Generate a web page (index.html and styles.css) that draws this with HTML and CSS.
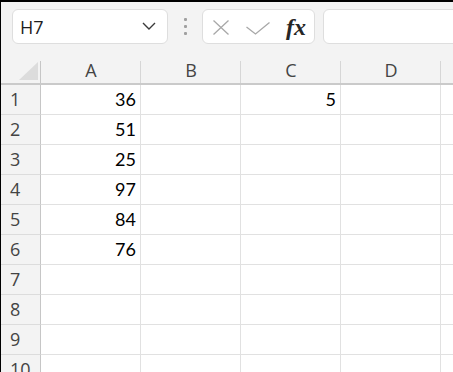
FILE: index.html
```html
<!DOCTYPE html>
<html>
<head>
<meta charset="utf-8">
<link rel="stylesheet" href="styles.css">
</head>
<body>
<div class="frame">
  <div class="toolbar">
    <div class="namebox">
      <span class="nb-text">H7</span>
      <svg class="chev" width="14" height="8" viewBox="0 0 14 8"><path d="M1 1 L7 7 L13 1" fill="none" stroke="#3a3a3a" stroke-width="1.4"/></svg>
    </div>
    <div class="grip"><span></span><span></span><span></span></div>
    <div class="fbtns">
      <svg class="ico-x" width="18" height="15" viewBox="0 0 18 15"><path d="M1.5 0.5 L16.5 14.5 M16.5 0.5 L1.5 14.5" fill="none" stroke="#a8a8a8" stroke-width="1.3"/></svg>
      <svg class="ico-ok" width="24" height="13" viewBox="0 0 24 13"><path d="M0.5 5 L9.5 12 L23.5 0.5" fill="none" stroke="#a8a8a8" stroke-width="1.3"/></svg>
      <span class="fx">fx</span>
    </div>
    <div class="finput"></div>
  </div>
  <div class="hdr">
    <div class="corner"><svg width="19" height="18" viewBox="0 0 19 18"><polygon points="19,0 19,18 0,18" fill="#dcdcdc"/></svg></div>
    <div class="ch">A</div>
    <div class="ch">B</div>
    <div class="ch">C</div>
    <div class="ch">D</div>
    <div class="ch last"></div>
  </div>
  <div class="row"><div class="rh">1</div><div class="c">36</div><div class="c"></div><div class="c">5</div><div class="c"></div><div class="c last"></div></div>
  <div class="row"><div class="rh">2</div><div class="c">51</div><div class="c"></div><div class="c"></div><div class="c"></div><div class="c last"></div></div>
  <div class="row"><div class="rh">3</div><div class="c">25</div><div class="c"></div><div class="c"></div><div class="c"></div><div class="c last"></div></div>
  <div class="row"><div class="rh">4</div><div class="c">97</div><div class="c"></div><div class="c"></div><div class="c"></div><div class="c last"></div></div>
  <div class="row"><div class="rh">5</div><div class="c">84</div><div class="c"></div><div class="c"></div><div class="c"></div><div class="c last"></div></div>
  <div class="row"><div class="rh">6</div><div class="c">76</div><div class="c"></div><div class="c"></div><div class="c"></div><div class="c last"></div></div>
  <div class="row"><div class="rh">7</div><div class="c"></div><div class="c"></div><div class="c"></div><div class="c"></div><div class="c last"></div></div>
  <div class="row"><div class="rh">8</div><div class="c"></div><div class="c"></div><div class="c"></div><div class="c"></div><div class="c last"></div></div>
  <div class="row"><div class="rh">9</div><div class="c"></div><div class="c"></div><div class="c"></div><div class="c"></div><div class="c last"></div></div>
  <div class="row"><div class="rh">10</div><div class="c"></div><div class="c"></div><div class="c"></div><div class="c"></div><div class="c last"></div></div>
</div>
</body>
</html>
```

FILE: styles.css
```css
html, body {
  margin: 0;
  padding: 0;
  background: #ffffff;
}
.frame {
  width: 453px;
  height: 372px;
  box-sizing: border-box;
  border-top: 2px solid #000;
  border-left: 1px solid #000;
  background: #f3f3f3;
  overflow: hidden;
  font-family: "Open Sans", "Noto Sans", sans-serif;
}
.toolbar {
  height: 55px;
  box-sizing: border-box;
  padding: 7px 0 0 11px;
  display: flex;
  align-items: flex-start;
}
.toolbar > * {
  flex: none;
}
.namebox {
  width: 156px;
  height: 35px;
  box-sizing: border-box;
  background: #fff;
  border: 1px solid #dedede;
  border-radius: 6px;
  display: flex;
  align-items: center;
  justify-content: space-between;
  padding: 2px 11px 0 7px;
}
.nb-text {
  font-size: 18px;
  color: #1e1e1e;
  line-height: 31px;
}
.chev {
  display: block;
  margin-top: -3px;
}
.grip {
  width: 34px;
  height: 35px;
  display: flex;
  flex-direction: column;
  align-items: center;
  justify-content: center;
  gap: 4px;
}
.grip span {
  width: 3px;
  height: 3px;
  background: #a0a0a0;
  border-radius: 1px;
}
.fbtns {
  width: 113px;
  height: 35px;
  box-sizing: border-box;
  background: #fff;
  border: 1px solid #dedede;
  border-radius: 6px;
  display: flex;
  align-items: center;
  padding: 0 0 0 9px;
}
.ico-x {
  display: block;
  margin-top: 2px;
  flex: none;
}
.ico-ok {
  display: block;
  margin-left: 16px;
  margin-top: 4px;
  flex: none;
}
.fx {
  margin-left: 16px;
  font-family: "Liberation Serif", "DejaVu Serif", serif;
  font-style: italic;
  font-weight: bold;
  font-size: 24px;
  color: #262626;
  line-height: 30px;
}
.finput {
  width: 160px;
  height: 35px;
  margin-left: 8px;
  box-sizing: border-box;
  background: #fff;
  border: 1px solid #dedede;
  border-radius: 6px;
}
.hdr {
  display: flex;
  height: 28px;
  box-sizing: border-box;
  border-bottom: 2px solid #cacaca;
}
.corner {
  width: 40px;
  flex: none;
  display: flex;
  justify-content: flex-end;
  align-items: flex-end;
  padding: 0 3px 3px 0;
  box-sizing: border-box;
  position: relative;
}
.corner::after,
.ch::after {
  content: "";
  position: absolute;
  right: 0;
  top: 4px;
  bottom: 0;
  width: 1px;
  background: #d6d6d6;
}
.corner::after {
  background: #c6c6c6;
}
.corner svg {
  display: block;
}
.ch {
  width: 100px;
  flex: none;
  position: relative;
  text-align: center;
  font-size: 18px;
  color: #444;
  line-height: 27px;
}
.ch.last::after {
  display: none;
}
.row {
  display: flex;
  height: 30px;
}
.rh {
  width: 40px;
  flex: none;
  box-sizing: border-box;
  border-right: 1px solid #c6c6c6;
  border-bottom: 1px solid #dcdcdc;
  padding-left: 9px;
  font-size: 18px;
  color: #444;
  line-height: 29px;
}
.c {
  width: 100px;
  flex: none;
  box-sizing: border-box;
  background: #fff;
  border-right: 1px solid #e1e1e1;
  border-bottom: 1px solid #e1e1e1;
  text-align: right;
  padding-right: 4px;
  font-family: "Lato", "Liberation Sans", sans-serif;
  font-size: 18px;
  color: #000;
  line-height: 29px;
}
.c.last {
  width: 40px;
  border-right: none;
}
```
